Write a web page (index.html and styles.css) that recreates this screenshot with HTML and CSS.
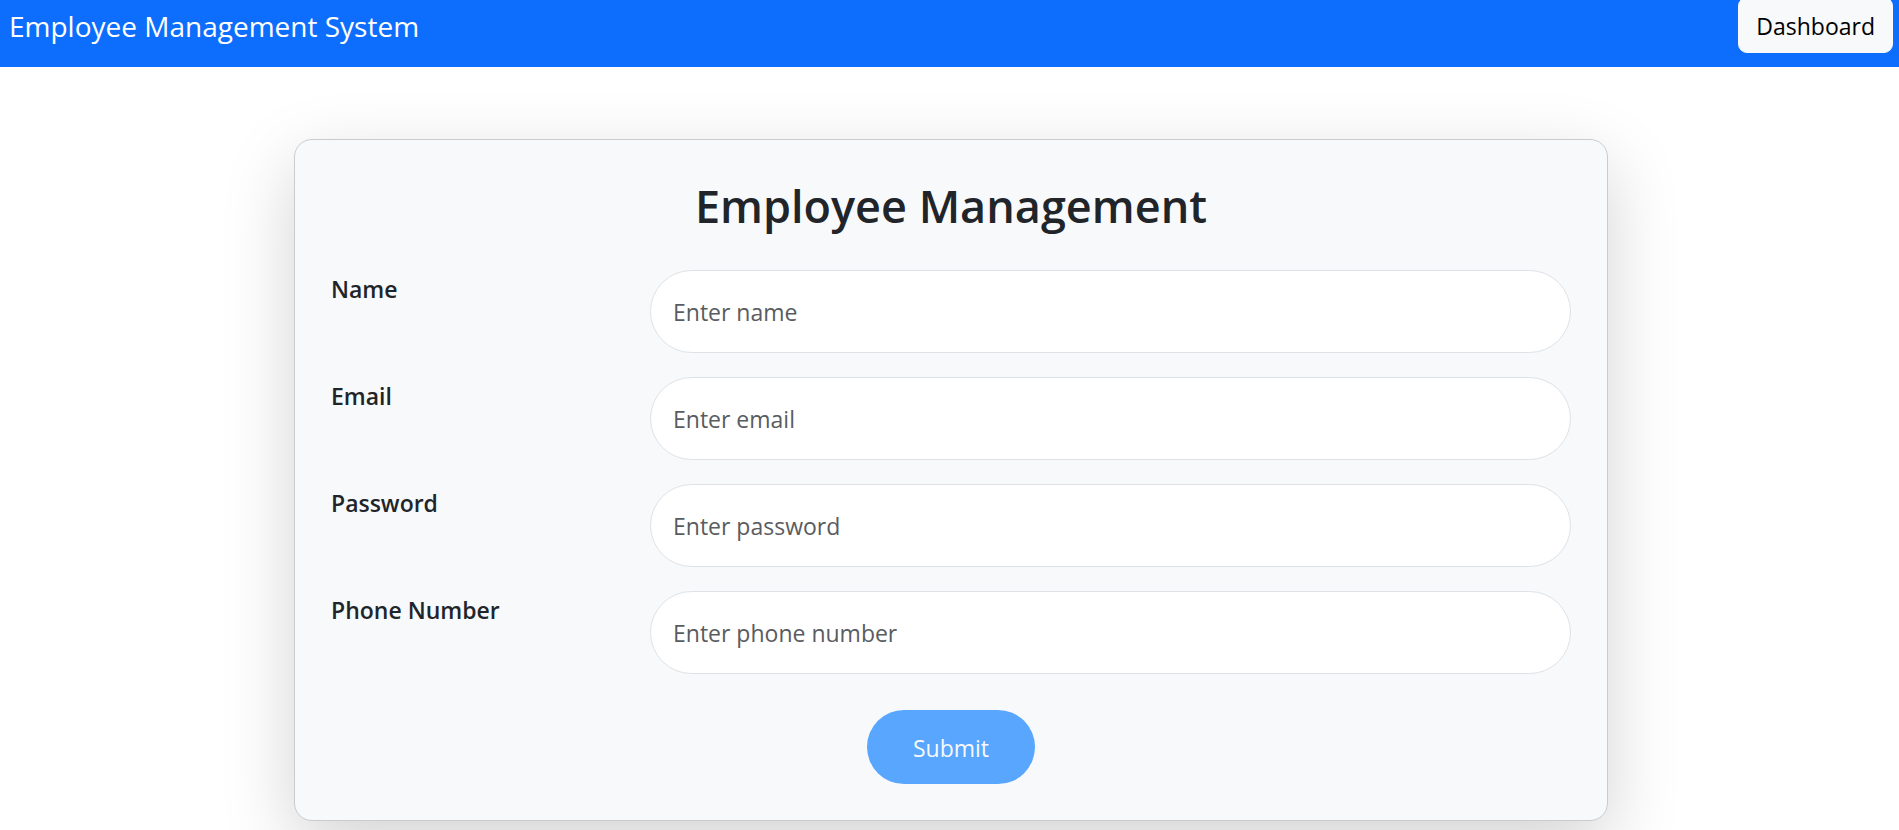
FILE: index.html
```html
<!DOCTYPE html>
<html lang="en">
<head>
<meta charset="utf-8">
<title>Employee Management System</title>
<link rel="stylesheet" href="styles.css">
</head>
<body>
<header class="navbar">
  <a class="brand" href="#">Employee Management System</a>
  <button class="btn-dashboard" type="button">Dashboard</button>
</header>
<main class="page">
  <form class="card">
    <h1 class="title">Employee Management</h1>
    <div class="row">
      <label class="label" for="name">Name</label>
      <input class="field" id="name" type="text" placeholder="Enter name">
    </div>
    <div class="row">
      <label class="label" for="email">Email</label>
      <input class="field" id="email" type="email" placeholder="Enter email">
    </div>
    <div class="row">
      <label class="label" for="password">Password</label>
      <input class="field" id="password" type="password" placeholder="Enter password">
    </div>
    <div class="row">
      <label class="label" for="phone">Phone Number</label>
      <input class="field" id="phone" type="tel" placeholder="Enter phone number">
    </div>
    <button class="btn-submit" type="submit" disabled>Submit</button>
  </form>
</main>
</body>
</html>
```
FILE: styles.css
```css
*, *::before, *::after { box-sizing: border-box; }

body {
  display: flow-root;
  min-height: 100vh;
  margin: 0;
  background: #fff;
  color: #212529;
  font-family: "Segoe UI", "Open Sans", "Noto Sans", sans-serif;
  font-size: 23px;
  line-height: 38px;
}

button, input { font: inherit; }

.navbar {
  display: flex;
  align-items: center;
  justify-content: space-between;
  margin-top: -3px;
  padding: 0 6px 14px 9px;
  background: #0d6efd;
}

.brand {
  padding-top: 2px;
  color: #fff;
  font-size: 28px;
  text-decoration: none;
}

.btn-dashboard {
  padding: 9px 17px 7px;
  border: 1px solid #f8f9fa;
  border-radius: 9px;
  background: #f8f9fa;
  color: #000;
}

.page { padding: 72px 24px 0 27px; }

.card {
  display: flex;
  flex-direction: column;
  gap: 24px;
  max-width: 1314px;
  margin: 0 auto;
  padding: 36px;
  border: 1px solid #c9cccf;
  border-radius: 18px;
  background: #f8f9fb;
  box-shadow: 0 24px 72px rgba(0, 0, 0, 0.175);
}

.title {
  margin: 0 0 10px;
  font-size: 45px;
  font-weight: 600;
  line-height: 60px;
  text-align: center;
}

.row {
  display: grid;
  grid-template-columns: calc(25% - 27px) 1fr;
  column-gap: 36px;
  align-items: start;
}

.label { font-weight: 600; }

.field {
  width: 100%;
  height: 83px;
  padding: 0 22px;
  border: 1px solid #dee2e6;
  border-radius: 42px;
  background: #fff;
  color: #212529;
}

.field::placeholder { color: #595c5f; opacity: 1; }

.btn-submit {
  align-self: center;
  margin-top: 12px;
  padding: 19px 46px 17px;
  border: 0;
  border-radius: 37px;
  background: #58a6fd;
  color: #f8f9fb;
}
```
